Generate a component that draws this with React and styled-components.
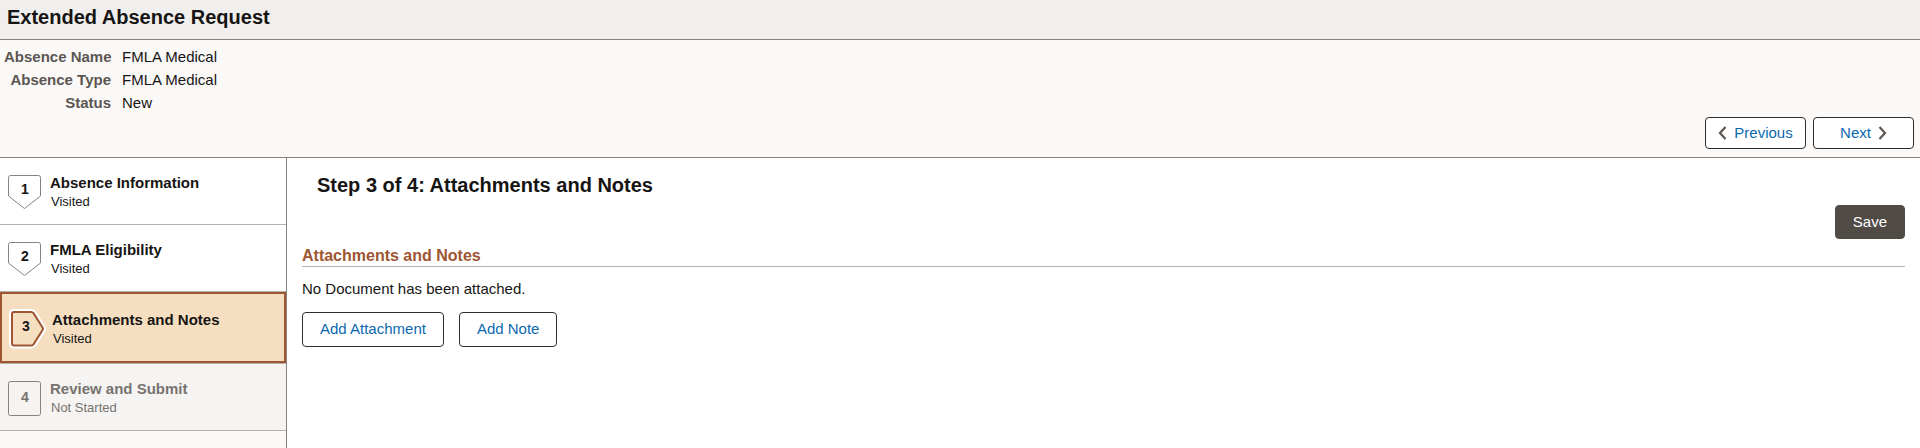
import styled, { createGlobalStyle } from "styled-components"

const GlobalStyle = createGlobalStyle`
  * {
    box-sizing: border-box;
  }

  body {
    margin: 0;
    background-color: #fbf9f8;
    color: #161513;
    font-family: "Liberation Sans", Arial, sans-serif;
    font-size: 15px;
  }
`

const Page = styled.div`
  display: flex;
  flex-direction: column;
  min-height: 100vh;
`

const Header = styled.header`
  padding: 5px 7px 10px;
  background-color: #f1efed;
  border-bottom: 1px solid #87827d;
`

const PageTitle = styled.h1`
  margin: 0;
  font-size: 20px;
  line-height: 24px;
`

const Summary = styled.section`
  padding: 5px 6px 8px 4px;
  border-bottom: 1px solid #87827d;
`

const Details = styled.dl`
  display: grid;
  grid-template-columns: 107px 1fr;
  column-gap: 11px;
  margin: 0;
  line-height: 23px;
`

const Label = styled.dt`
  color: #5b5652;
  font-weight: bold;
  text-align: right;
  white-space: nowrap;
`

const Value = styled.dd`
  margin: 0;
`

const NavButtons = styled.nav`
  display: flex;
  justify-content: flex-end;
  gap: 7px;
  margin-top: 3px;
`

const Button = styled.button`
  padding: 0 17px 1px;
  height: 35px;
  background-color: white;
  border: 1px solid #312d2a;
  border-radius: 4px;
  color: #0c69b0;
  font-family: inherit;
  font-size: 15px;
  line-height: 20px;
  cursor: pointer;
`

const NavButton = styled(Button)`
  display: flex;
  justify-content: center;
  align-items: center;
  gap: 7px;
  min-width: 101px;
  height: 32px;
  padding: 0 8px;
`

const SaveButton = styled(Button)`
  height: 34px;
  border-color: #514b46;
  background-color: #514b46;
  color: white;
`

const Body = styled.div`
  display: flex;
  flex: 1;
`

const Sidebar = styled.nav`
  flex: 0 0 287px;
  border-right: 1px solid #87827d;
`

const StepList = styled.ol`
  margin: 0;
  padding: 0;
  list-style: none;
`

const StepItem = styled.li`
  border-bottom: 1px solid #b5b1ad;
`

const StepLink = styled.a`
  display: flex;
  align-items: flex-start;
  gap: 8px;
  min-height: ${props => props.$current ? "71px" : "66px"};
  padding: ${props => props.$current ? "17px" : "16px"} 6px 0;
  border: ${props => props.$current ? "2px solid #9d5532" : "none"};
  background-color: ${props => props.$current ? "#f5dfc0" : props.$disabled ? "#f5f4f2" : "white"};
  color: ${props => props.$disabled ? "#77736f" : "inherit"};
  text-decoration: none;
`

const Badge = styled.svg`
  flex: none;
  width: 36px;
  height: 38px;
  font-size: 14px;
  font-weight: bold;
  text-anchor: middle;
`

const StepName = styled.span`
  display: block;
  font-size: 15px;
  font-weight: bold;
  line-height: 18px;
`

const StepStatus = styled.span`
  display: block;
  padding-left: 1px;
  font-size: 13px;
  line-height: 19px;
`

const Content = styled.main`
  flex: 1;
  padding: 15px;
  background-color: white;
`

const StepTitle = styled.h2`
  margin: 0 0 8px 15px;
  font-size: 20px;
  line-height: 24px;
`

const Actions = styled.div`
  display: flex;
  justify-content: flex-end;
`

const SectionTitle = styled.h3`
  margin: 6px 0 12px;
  border-bottom: 1px solid #b5b1ad;
  color: #9d5532;
  font-size: 16px;
  line-height: 21px;
`

const Message = styled.p`
  margin: 0 0 13px;
  line-height: 20px;
`

const ButtonRow = styled.div`
  display: flex;
  gap: 15px;
`

const details = [
  { label: "Absence Name", value: "FMLA Medical" },
  { label: "Absence Type", value: "FMLA Medical" },
  { label: "Status", value: "New" },
]

const steps = [
  { name: "Absence Information", status: "Visited" },
  { name: "FMLA Eligibility", status: "Visited" },
  { name: "Attachments and Notes", status: "Visited", current: true },
  { name: "Review and Submit", status: "Not Started", disabled: true },
]

const visitedShape = "M4.500 1.500H32.500Q34.500 1.500 34.500 3.500V22L18.500 34.500L2.500 22V3.500Q2.500 1.500 4.500 1.500Z"
const currentShape = "M6 1H23Q24.500 1 25.500 2.200L34.700 16.800Q35.300 17.800 34.700 18.800L25.500 33.300Q24.500 34.500 23 34.500H6Q4 34.500 4 32.500V3Q4 1 6 1Z"

const StepBadge = ({ step, number }) => (
  <Badge viewBox="0 0 36 38" overflow="visible" aria-hidden="true">
    {step.current ? (
      <>
        <path d={currentShape} fill="none" stroke="white" strokeWidth="6" strokeLinejoin="round" />
        <path d={currentShape} fill="#f5dfc0" stroke="#9d5532" strokeWidth="2" />
      </>
    ) : step.disabled ? (
      <rect x="2.5" y="1.5" width="32" height="34" rx="2" fill="none" stroke="#87827d" />
    ) : (
      <path d={visitedShape} fill="white" stroke="#87827d" />
    )}
    <text x={step.current ? 18 : 19} y={step.disabled ? 22 : 20} fill="currentColor">{number}</text>
  </Badge>
)

const Chevron = ({ points }) => (
  <svg width="9" height="14" viewBox="0 0 9 14" aria-hidden="true">
    <polyline points={points} fill="none" stroke="#5b5652" strokeWidth="2.2" />
  </svg>
)

const App = () => {
  return (
    <Page>
      <GlobalStyle />
      <Header>
        <PageTitle>Extended Absence Request</PageTitle>
      </Header>
      <Summary>
        <Details>
          {details.map(({ label, value }) => [
            <Label key={label}>{label}</Label>,
            <Value key={label + "-value"}>{value}</Value>,
          ])}
        </Details>
        <NavButtons>
          <NavButton type="button">
            <Chevron points="7.500,1 2,7 7.500,13" />
            Previous
          </NavButton>
          <NavButton type="button">
            Next
            <Chevron points="1.500,1 7,7 1.500,13" />
          </NavButton>
        </NavButtons>
      </Summary>
      <Body>
        <Sidebar>
          <StepList>
            {steps.map((step, i) => (
              <StepItem key={step.name}>
                <StepLink
                  href={"#step-" + (i + 1)}
                  $current={step.current}
                  $disabled={step.disabled}
                  aria-current={step.current ? "step" : undefined}
                >
                  <StepBadge step={step} number={i + 1} />
                  <span>
                    <StepName>{step.name}</StepName>
                    <StepStatus>{step.status}</StepStatus>
                  </span>
                </StepLink>
              </StepItem>
            ))}
          </StepList>
        </Sidebar>
        <Content>
          <StepTitle>Step 3 of 4: Attachments and Notes</StepTitle>
          <Actions>
            <SaveButton type="button">Save</SaveButton>
          </Actions>
          <SectionTitle>Attachments and Notes</SectionTitle>
          <Message>No Document has been attached.</Message>
          <ButtonRow>
            <Button type="button">Add Attachment</Button>
            <Button type="button">Add Note</Button>
          </ButtonRow>
        </Content>
      </Body>
    </Page>
  )
}

export default App
